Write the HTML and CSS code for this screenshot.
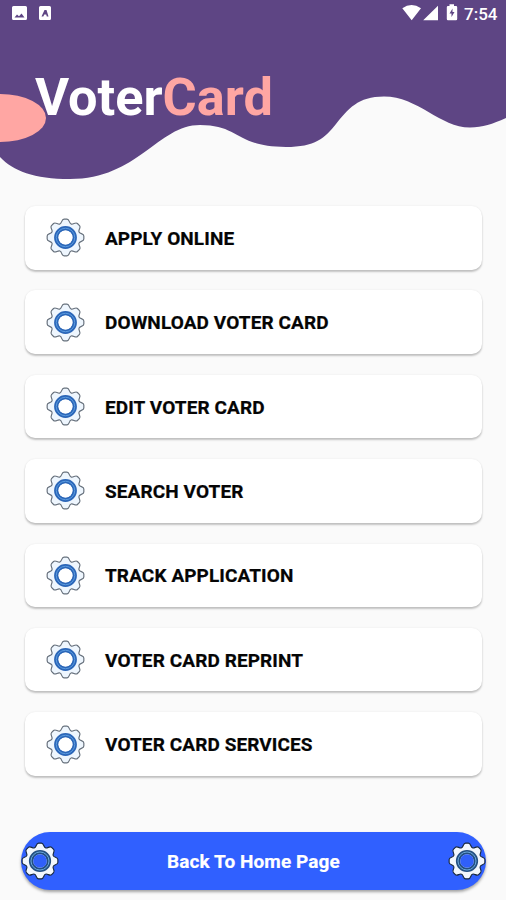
FILE: index.html
```html
<!DOCTYPE html>
<html lang="en">
<head>
<meta charset="utf-8">
<title>VoterCard</title>
<link rel="stylesheet" href="styles.css">
</head>
<body>
<svg class="defs" aria-hidden="true">
  <symbol id="gear" viewBox="-20 -20 40 40">
    <path class="gear-body" fill-rule="evenodd" d="M-5.7-13.9C-3.6-14.6-4.2-18.8-1.5-18.8L1.5-18.8C4.2-18.8 3.6-14.6 5.7-13.9C7.78-12.87 10.32-16.26 12.23-14.35L14.35-12.23C16.26-10.32 12.87-7.78 13.9-5.7C14.6-3.6 18.8-4.2 18.8-1.5L18.8 1.5C18.8 4.2 14.6 3.6 13.9 5.7C12.87 7.78 16.26 10.32 14.35 12.23L12.23 14.35C10.32 16.26 7.78 12.87 5.7 13.9C3.6 14.6 4.2 18.8 1.5 18.8L-1.5 18.8C-4.2 18.8-3.6 14.6-5.7 13.9C-7.78 12.87-10.32 16.26-12.23 14.35L-14.35 12.23C-16.26 10.32-12.87 7.78-13.9 5.7C-14.6 3.6-18.8 4.2-18.8 1.5L-18.8-1.5C-18.8-4.2-14.6-3.6-13.9-5.7C-12.87-7.78-16.26-10.32-14.35-12.23L-12.23-14.35C-10.32-16.26-7.78-12.87-5.7-13.9Z"/>
    <circle class="gear-ring" r="9.4"/>
    <circle class="gear-line" r="9.5"/>
    <circle class="gear-hole" r="7.2"/>
  </symbol>
</svg>
<header class="hero">
  <svg class="wave" viewBox="0 0 506 190" aria-hidden="true">
    <path fill="#5e4584" d="M0 0H506V118C492 124 483 127.5 470 127.5C440 127.5 418 96.5 384 96.5C358 96.5 348 109 336 124C325 138 315 147 286 147C236 147 240 125 200 125C158 125 138 179 70 179C34 179 13 171 0 157Z"/>
    <ellipse fill="#ffa6a3" cx="0" cy="118" rx="46" ry="24"/>
  </svg>
  <div class="status">
    <svg class="status-left" viewBox="0 0 60 26" aria-hidden="true">
      <path fill="#fff" fill-rule="evenodd" d="M13.500 6H25.500Q27 6 27 7.500V18.500Q27 20 25.500 20H13.500Q12 20 12 18.500V7.500Q12 6 13.500 6ZM14.500 17.500H24.500L21.500 13.500L19 16.200L17 14.500ZM40.500 6H49.500Q51 6 51 7.500V18.500Q51 20 49.500 20H40.500Q39 20 39 18.500V7.500Q39 6 40.500 6ZM41.500 16.500H43.300L44.300 14.500H46.200L46.800 16.500H48.500L46.500 10H44.500Z"/>
    </svg>
    <div class="status-right">
      <svg class="status-icons" viewBox="0 0 58 26" aria-hidden="true">
        <path fill="#fff" d="M2.300 8.200Q11.500 1.800 21 8.200L11.700 20.200ZM38 5.800V20.200H23.200Z"/>
        <path fill="#fff" fill-rule="evenodd" d="M49.500 4.200H54V6H56Q57.200 6 57.200 7.200V19Q57.200 20.200 56 20.200H48Q46.800 20.200 46.800 19V7.200Q46.800 6 48 6H49.500ZM52.500 8.500L49.500 13.500H51.500V17L54.500 12H52.500Z"/>
      </svg>
      <span class="time">7:54</span>
    </div>
  </div>
  <h1 class="title">Voter<span class="accent">Card</span></h1>
</header>
<main class="menu">
  <div class="card"><svg class="gear"><use href="#gear"/></svg><span class="label">APPLY ONLINE</span></div>
  <div class="card"><svg class="gear"><use href="#gear"/></svg><span class="label">DOWNLOAD VOTER CARD</span></div>
  <div class="card"><svg class="gear"><use href="#gear"/></svg><span class="label">EDIT VOTER CARD</span></div>
  <div class="card"><svg class="gear"><use href="#gear"/></svg><span class="label">SEARCH VOTER</span></div>
  <div class="card"><svg class="gear"><use href="#gear"/></svg><span class="label">TRACK APPLICATION</span></div>
  <div class="card"><svg class="gear"><use href="#gear"/></svg><span class="label">VOTER CARD REPRINT</span></div>
  <div class="card"><svg class="gear"><use href="#gear"/></svg><span class="label">VOTER CARD SERVICES</span></div>
</main>
<div class="home">
  <svg class="gear gear-solid"><use href="#gear"/></svg>
  <span class="label">Back To Home Page</span>
  <svg class="gear gear-solid"><use href="#gear"/></svg>
</div>
</body>
</html>
```
FILE: styles.css
```css
* { box-sizing: border-box; }
body {
  margin: 0;
  width: 506px;
  height: 900px;
  overflow: hidden;
  background: #fafafa;
  font-family: Roboto, "Liberation Sans", sans-serif;
}
.defs { position: absolute; width: 0; height: 0; }
.hero { position: relative; height: 206px; }
.wave { position: absolute; left: 0; top: 0; width: 506px; height: 190px; }
.status {
  position: relative;
  display: flex;
  justify-content: space-between;
  height: 26px;
}
.status-left { width: 60px; height: 26px; }
.status-right { display: flex; width: 106px; }
.status-icons { width: 58px; height: 26px; }
.time {
  margin-left: 6px;
  color: #fff;
  font-size: 17px;
  font-weight: 500;
  line-height: 28px;
}
.title {
  position: relative;
  margin: 41px 0 0 35px;
  color: #fff;
  font-size: 52.300px;
  font-weight: 700;
  line-height: 60px;
  white-space: nowrap;
}
.accent { color: #ffa6a3; }
.menu {
  display: grid;
  gap: 20.900px;
  padding: 0 24px 0 25px;
}
.card {
  display: flex;
  align-items: center;
  height: 63.500px;
  padding-left: 21px;
  border-radius: 10px;
  background: #fff;
  box-shadow: 0 2px 2px rgba(0, 0, 0, .22), 0 0 2px rgba(0, 0, 0, .08);
  color: #050505;
}
.label {
  padding-top: 1px;
  font-size: 19px;
  font-weight: 700;
  letter-spacing: .1px;
  -webkit-text-stroke: .2px currentColor;
}
.gear {
  flex: none;
  width: 39px;
  height: 39px;
  --body: #eef6fe;
  --edge: #66707c;
  --ring: #2b66b8;
  --line: #5c9ce0;
  --hole: #fff;
}
.card .gear { margin-right: 20px; }
.gear-body { fill: var(--body); stroke: var(--edge); stroke-width: 1.200; }
.gear-ring { fill: none; stroke: var(--ring); stroke-width: 4.600; }
.gear-line { fill: none; stroke: var(--line); stroke-width: 1; }
.gear-hole { fill: var(--hole); }
.gear-solid {
  width: 38px;
  height: 38px;
  --body: #f2f7fd;
  --edge: #18283f;
  --ring: #234f82;
  --line: #70aee0;
  --hole: #3060fa;
}
.home {
  display: flex;
  align-items: center;
  justify-content: space-between;
  width: 465px;
  height: 58px;
  margin: 56.100px 0 0 21px;
  border-radius: 29px;
  background: #3060ff;
  box-shadow: 0 2px 3px rgba(0, 0, 0, .35);
  color: #fff;
}
```
